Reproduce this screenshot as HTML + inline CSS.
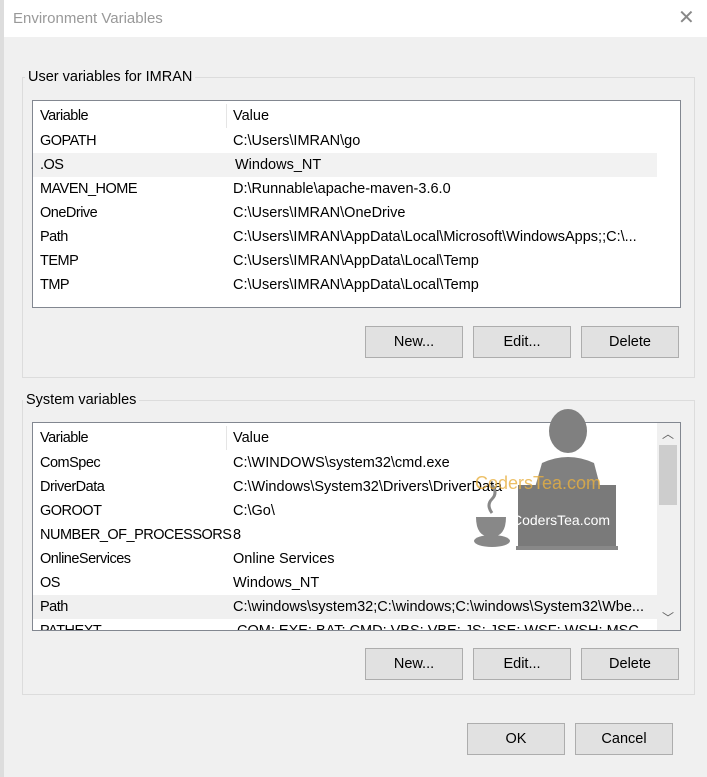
<!DOCTYPE html>
<html><head><style>
body{margin:0;width:707px;height:777px;overflow:hidden;background:#f0f0f0;font-family:"Liberation Sans",sans-serif;font-size:14.5px;color:#000;position:relative}
.a{position:absolute}
.title{left:4px;top:0;width:703px;height:37px;background:#fff}
.grp{border:1px solid #dcdcdc}
.lst{background:#fff;border:1px solid #828790;overflow:hidden}
.row{position:absolute;left:0;height:24px;line-height:24px;width:100%;white-space:nowrap}
.row span{position:absolute}
.row span:first-child{letter-spacing:-0.5px}
.btn{background:#e1e1e1;border:1px solid #adadad;text-align:center;line-height:30px;height:30px;width:96px;font-size:14.5px}
</style></head><body>
<div class="a" style="left:0;top:0;width:4px;height:777px;background:#ddd"></div>
<div class="a title"></div>
<div class="a" style="left:13px;top:10px;color:#999;font-size:15px">Environment Variables</div>
<div class="a" style="left:678px;top:5px;color:#888;font-size:20px">✕</div>

<div class="a grp" style="left:22px;top:77px;width:671px;height:299px"></div>
<div class="a" style="left:25px;top:69px;background:#f0f0f0;padding:0 3px;font-size:14.5px">User variables for IMRAN</div>
<div class="a lst" style="left:32px;top:100px;width:647px;height:206px">
 <div class="row" style="top:3px"><span style="left:7px">Variable</span><span style="left:200px">Value</span></div>
 <div class="a" style="left:193px;top:3px;width:1px;height:24px;background:#e5e5e5"></div>
 <div class="row" style="top:28px"><span style="left:7px">GOPATH</span><span style="left:200px">C:\Users\IMRAN\go</span></div>
 <div class="row" style="top:52px;background:#f2f2f2;width:624px"><span style="left:7px">.OS</span><span style="left:202px">Windows_NT</span></div>
 <div class="row" style="top:76px"><span style="left:7px">MAVEN_HOME</span><span style="left:200px">D:\Runnable\apache-maven-3.6.0</span></div>
 <div class="row" style="top:100px"><span style="left:7px">OneDrive</span><span style="left:200px">C:\Users\IMRAN\OneDrive</span></div>
 <div class="row" style="top:124px"><span style="left:7px">Path</span><span style="left:200px">C:\Users\IMRAN\AppData\Local\Microsoft\WindowsApps;;C:\...</span></div>
 <div class="row" style="top:148px"><span style="left:7px">TEMP</span><span style="left:200px">C:\Users\IMRAN\AppData\Local\Temp</span></div>
 <div class="row" style="top:172px"><span style="left:7px">TMP</span><span style="left:200px">C:\Users\IMRAN\AppData\Local\Temp</span></div>
</div>
<div class="a btn" style="left:365px;top:326px">New...</div>
<div class="a btn" style="left:473px;top:326px">Edit...</div>
<div class="a btn" style="left:581px;top:326px">Delete</div>

<div class="a grp" style="left:22px;top:400px;width:671px;height:293px"></div>
<div class="a" style="left:23px;top:392px;background:#f0f0f0;padding:0 3px;font-size:14.5px">System variables</div>
<div class="a lst" style="left:32px;top:422px;width:647px;height:207px">
 <div class="row" style="top:3px"><span style="left:7px">Variable</span><span style="left:200px">Value</span></div>
 <div class="a" style="left:193px;top:3px;width:1px;height:24px;background:#e5e5e5"></div>
 <div class="row" style="top:28px"><span style="left:7px">ComSpec</span><span style="left:200px">C:\WINDOWS\system32\cmd.exe</span></div>
 <div class="row" style="top:52px"><span style="left:7px">DriverData</span><span style="left:200px">C:\Windows\System32\Drivers\DriverData</span></div>
 <div class="row" style="top:76px"><span style="left:7px">GOROOT</span><span style="left:200px">C:\Go\</span></div>
 <div class="row" style="top:100px"><span style="left:7px">NUMBER_OF_PROCESSORS</span><span style="left:200px">8</span></div>
 <div class="row" style="top:124px"><span style="left:7px">OnlineServices</span><span style="left:200px">Online Services</span></div>
 <div class="row" style="top:148px"><span style="left:7px">OS</span><span style="left:200px">Windows_NT</span></div>
 <div class="row" style="top:172px;background:#f0f0f0;width:624px"><span style="left:7px">Path</span><span style="left:200px">C:\windows\system32;C:\windows;C:\windows\System32\Wbe...</span></div>
 <div class="row" style="top:196px"><span style="left:7px">PATHEXT</span><span style="left:200px">.COM;.EXE;.BAT;.CMD;.VBS;.VBE;.JS;.JSE;.WSF;.WSH;.MSC</span></div>
 <div class="a" style="left:624px;top:0;width:23px;height:207px;background:#f0f0f0"></div>
 <div class="a" style="left:626px;top:22px;width:18px;height:60px;background:#cdcdcd"></div>
 <div class="a" style="left:629px;top:2px;color:#606060;font-size:12px">︿</div>
 <div class="a" style="left:629px;top:186px;color:#606060;font-size:12px">﹀</div>
</div>
<svg class="a" style="left:470px;top:405px" width="160" height="150">
 <ellipse cx="98" cy="26" rx="19" ry="22" fill="#808080"/>
 <path d="M72 58 Q98 46 124 58 L135 100 L60 100 Z" fill="#808080"/>
 <rect x="48" y="80" width="98" height="62" fill="#7a7a7a"/>
 <rect x="46" y="141" width="102" height="4" fill="#888"/>
 <ellipse cx="22" cy="136" rx="18" ry="6" fill="#888"/>
 <path d="M6 112 h30 q0 20 -15 20 q-15 0 -15 -20z" fill="#888"/>
 <path d="M22 108 q-6 -8 0 -14 q6 -6 0 -14" stroke="#888" stroke-width="3" fill="none"/>
 <text x="42" y="120" fill="#fff" font-size="14" font-family="Liberation Sans">CodersTea.com</text>
 <text x="5" y="84" fill="#e8b040" font-size="18" font-family="Liberation Sans" opacity=".8">CodersTea.com</text>
</svg>
<div class="a btn" style="left:365px;top:648px">New...</div>
<div class="a btn" style="left:473px;top:648px">Edit...</div>
<div class="a btn" style="left:581px;top:648px">Delete</div>

<div class="a btn" style="left:467px;top:723px">OK</div>
<div class="a btn" style="left:575px;top:723px">Cancel</div>
</body></html>
